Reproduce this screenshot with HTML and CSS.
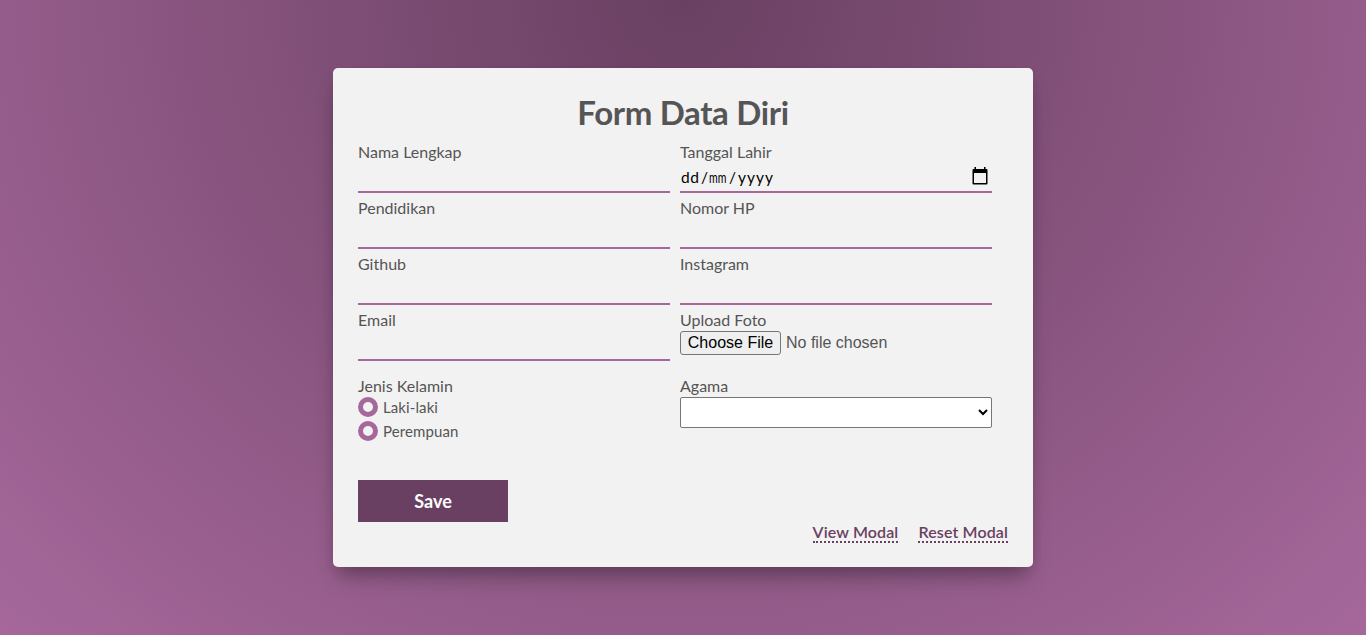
FILE: index.html
```
<!DOCTYPE html>
<html lang="id">
<head>
<meta charset="utf-8">
<title>Form Data Diri</title>
<link rel="stylesheet" href="styles.css">
</head>
<body>
<main class="card">
  <h1 class="title">Form Data Diri</h1>
  <form class="form">
    <div class="fields">
      <label class="field">Nama Lengkap<input class="line-input" type="text"></label>
      <label class="field">Tanggal Lahir
        <span class="line-input date-input"><span class="date-text"><span class="day">dd</span><span class="slash">/</span><span class="month">mm</span><span class="slash">/</span><span class="year">yyyy</span></span>
          <svg class="calendar" viewBox="0 0 16 18" width="16" height="18"><path d="M2.500 0H4v2h8V0h1.500v2h1q1 0 1 1V16.500q0 1-1 1h-13q-1 0-1-1V3q0-1 1-1h1zM2 6v10h12V6z" fill="#000" fill-rule="evenodd"/></svg>
        </span>
      </label>
      <label class="field">Pendidikan<input class="line-input" type="text"></label>
      <label class="field">Nomor HP<input class="line-input" type="text"></label>
      <label class="field">Github<input class="line-input" type="text"></label>
      <label class="field">Instagram<input class="line-input" type="text"></label>
      <label class="field">Email<input class="line-input" type="email"></label>
      <div class="field">Upload Foto
        <div class="file"><button class="file-button" type="button">Choose File</button><span>No file chosen</span></div>
      </div>
    </div>
    <div class="fields choices">
      <div class="field">Jenis Kelamin
        <label class="radio"><span class="ring"></span>Laki-laki</label>
        <label class="radio"><span class="ring"></span>Perempuan</label>
      </div>
      <label class="field">Agama
        <select class="select"><option></option></select>
      </label>
    </div>
    <button class="save" type="button">Save</button>
  </form>
  <nav class="links"><a class="link">View Modal</a><a class="link">Reset Modal</a></nav>
</main>
</body>
</html>
```
FILE: styles.css
```
* { box-sizing: border-box; }
body {
  margin: 0;
  height: 635px;
  overflow: hidden;
  padding-top: 68px;
  font: 16px/20px Lato, sans-serif;
  color: #555;
  background: radial-gradient(ellipse at top, #694062 0%, #a6689b 100%);
}
.card {
  width: 700px;
  height: 499px;
  margin: 0 auto;
  padding: 25px;
  background: #f2f2f2;
  border-radius: 5px;
  box-shadow: 0 15px 20px -6px rgba(0, 0, 0, .3), 0 4px 12px rgba(0, 0, 0, .08);
}
.title {
  margin: 0 0 11px;
  font-size: 33px;
  line-height: 38px;
  font-weight: 700;
  letter-spacing: -.35px;
  text-align: center;
}
.fields {
  display: grid;
  grid-template-columns: 312px 312px;
  column-gap: 10px;
  grid-auto-rows: 56px;
}
.field { display: block; }
.line-input {
  display: block;
  width: 100%;
  height: 31px;
  padding: 0;
  border: 0;
  border-bottom: 2px solid #a6689b;
  background: transparent;
  outline: none;
}
.date-input {
  display: flex;
  justify-content: space-between;
  padding: 4px 4px 0 1px;
  color: #000;
}
.date-text { display: flex; padding-top: 1px; font-size: 15.500px; }
.day { width: 19px; letter-spacing: .5px; }
.slash { width: 9px; text-align: center; }
.month {
  width: 28px;
  margin-right: -9px;
  transform: scaleX(.68);
  transform-origin: left;
}
.year { margin-left: 1px; letter-spacing: 1px; }
.calendar { margin-top: 1px; }
.file {
  display: flex;
  align-items: center;
  gap: 5px;
  margin-top: 1px;
  font: 16px/18px "Liberation Sans", Arial, sans-serif;
}
.file-button {
  width: 101px;
  height: 24px;
  padding: 0;
  border: 1px solid #767676;
  border-radius: 3px;
  background: #efefef;
  color: #000;
  font: inherit;
}
.choices { margin-top: 10px; grid-auto-rows: 104px; }
.radio {
  display: flex;
  align-items: center;
  gap: 5px;
  height: 20px;
  margin: 1px 0 4px;
  font-size: 15px;
  letter-spacing: .1px;
}
.ring {
  width: 20px;
  height: 20px;
  border: 5px solid #a6689b;
  border-radius: 50%;
}
.select {
  display: block;
  width: 312px;
  height: 31px;
  margin-top: 1px;
  border: 1px solid #767676;
  border-radius: 2px;
  background: #fff;
  font-size: 16px;
}
.save {
  display: block;
  width: 150px;
  height: 42px;
  border: 0;
  background: #694062;
  color: #fff;
  font: 700 18px Lato, sans-serif;
}
.links {
  display: flex;
  justify-content: flex-end;
  gap: 20px;
}
.link {
  height: 21px;
  border-bottom: 2px dotted #694062;
  color: #694062;
  font-weight: 600;
  letter-spacing: .13px;
}
```
